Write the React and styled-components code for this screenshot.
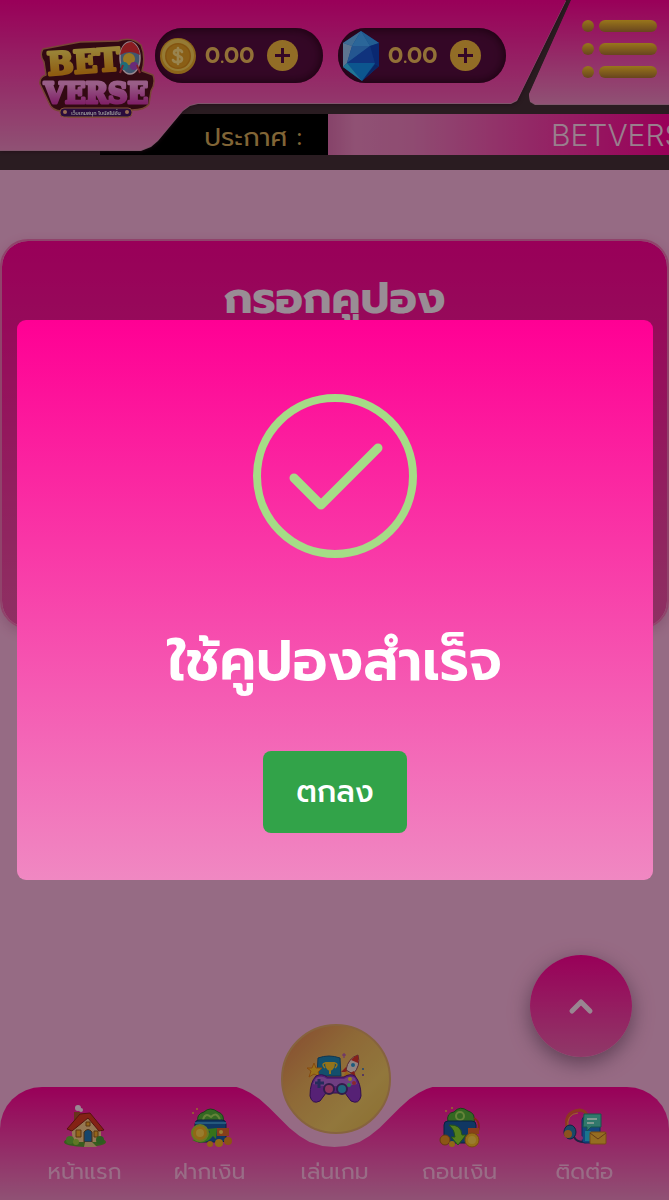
import styled, { createGlobalStyle } from "styled-components";

const GlobalStyle = createGlobalStyle`
  *, *::before, *::after {
    box-sizing: border-box;
  }
  body {
    margin: 0;
    background: #fbb2dc;
    font-family: Prompt, "Noto Sans", sans-serif;
  }
  button {
    font-family: inherit;
    border: 0;
    padding: 0;
    cursor: pointer;
  }
  svg {
    display: block;
  }
`;

const Page = styled.div`
  min-height: 100vh;
  padding-bottom: 120px;
`;

/* header */

const Header = styled.header`
  display: grid;
  grid-template-columns: 1fr 38px 103px;
  grid-template-rows: 114px 41px;
  padding-bottom: 15px;
  background: #462f37;
`;

const PanelEdge = styled.div`
  z-index: 1;
  grid-row: 1 / 3;
  grid-column: 1 / 3;
  filter: drop-shadow(0 1px 0 #d48fb2) drop-shadow(0 0 2px #3a1028);
`;

const MainPanel = styled.div`
  display: flex;
  align-items: flex-start;
  height: 150px;
  padding: 28px 0 0 38px;
  background: linear-gradient(#ff0094, #f088c2);
  clip-path: polygon(
    0 0, 100% 0, calc(100% - 46px) 94px, calc(100% - 49px) 100px, calc(100% - 55px) 103px,
    198px 103px, 190px 105px, 183px 110px, 158px 140px, 151px 146px, 141px 150px, 0 150px
  );
`;

const Logo = styled.a`
  flex: none;
  margin-top: 7px;
`;

const Wallet = styled.div`
  display: flex;
  align-items: center;
  width: 168px;
  height: 55px;
  margin-right: 15px;
  padding-left: 3px;
  border-radius: 28px;
  background: #580d40;
  box-shadow: inset 0 0 8px 2px #33051f;
`;

const WalletIcon = styled.span`
  display: flex;
  justify-content: center;
  width: 40px;
  margin-right: 7px;
`;

const Amount = styled.span`
  width: 62px;
  color: #f4bd5c;
  font-size: 22px;
  font-weight: 600;
  line-height: 30px;
`;

const PlusButton = styled.button`
  display: grid;
  place-items: center;
  width: 31px;
  height: 31px;
  border-radius: 50%;
  background: #f4b640;
`;

const MenuEdge = styled.div`
  grid-row: 1;
  grid-column: 2 / 4;
  filter: drop-shadow(0 1px 0 #d48fb2);
`;

const MenuPanel = styled.div`
  display: flex;
  justify-content: flex-end;
  height: 104px;
  padding: 20px 12px 0 0;
  background: linear-gradient(#ff0094, #f088c2);
  clip-path: polygon(43px 0, 100% 0, 100% 100%, 7px 100%, 2px 101px, 1px 94px);
`;

const MenuButton = styled.button`
  height: 58px;
  background: none;
`;

const NewsLabel = styled.div`
  grid-row: 2;
  grid-column: 1 / 4;
  width: 328px;
  padding-right: 26px;
  background: linear-gradient(to right, #462f37 100px, #000 100px);
  color: #d8a95a;
  font-size: 26px;
  font-weight: 400;
  line-height: 48px;
  text-align: right;
`;

const NewsTrack = styled.div`
  grid-row: 2;
  grid-column: 1 / 4;
  margin-left: 328px;
  padding-left: 223px;
  background: linear-gradient(to right, #e070b0, #f088c2 8%, #ee7dbd 25%, #ff0094);
  color: #ffd4ec;
  font-family: Inter, sans-serif;
  font-size: 30px;
  font-weight: 300;
  line-height: 42px;
  white-space: nowrap;
  overflow: hidden;
`;

/* coupon card */

const CouponCard = styled.section`
  height: 390px;
  margin-top: 69px;
  padding-top: 23px;
  border: 2px solid #f070b2;
  border-radius: 28px;
  background: linear-gradient(#ff0094, #ec52a4) padding-box;
  box-shadow: 0 4px 12px rgba(120, 20, 80, 0.2);
  text-align: center;
`;

const CardTitle = styled.h1`
  margin: 0;
  color: #ffecf8;
  font-size: 44px;
  font-weight: 700;
  line-height: 70px;
`;

/* floating button and bottom bar */

const TopButton = styled.button`
  position: fixed;
  right: 37px;
  bottom: 143px;
  display: grid;
  place-items: center;
  width: 102px;
  height: 102px;
  border-radius: 50%;
  background: linear-gradient(#ff0094, #f060ae);
  box-shadow: 0 6px 20px rgba(60, 30, 60, 0.5);
`;

const NOTCH = [
  [98, 0], [92, 2], [84, 6], [75, 12], [65, 21], [55, 31], [45, 41], [35, 49], [25, 55], [12, 59], [0, 60],
];
const notchLeft = NOTCH.map(([x, y]) => `calc(50% - ${x}px) ${y}px`);
const notchRight = NOTCH.slice(0, -1).reverse().map(([x, y]) => `calc(50% + ${x}px) ${y}px`);
const notchPath = ["0 0", ...notchLeft, ...notchRight, "100% 0", "100% 100%", "0 100%"].join(", ");

const BottomBar = styled.nav`
  position: fixed;
  right: 0;
  bottom: 0;
  left: 0;
`;

const BarItems = styled.div`
  display: grid;
  grid-template-columns: repeat(5, 1fr);
  height: 113px;
  padding: 0 22px;
  border-radius: 42px 42px 0 0;
  background: linear-gradient(#ff0094, #f088c2);
  clip-path: polygon(${notchPath});
`;

const BarLink = styled.a`
  display: flex;
  flex-direction: column;
  align-items: center;
  justify-content: flex-end;
  padding-bottom: 10px;
  color: #ffb6e0;
  font-size: 22px;
  font-weight: 400;
  line-height: 36px;
  text-decoration: none;
  white-space: nowrap;

  svg {
    margin-bottom: 6px;
  }
`;

const PlayBadge = styled.a`
  position: absolute;
  bottom: 66px;
  left: 50%;
  display: grid;
  place-items: center;
  width: 110px;
  height: 110px;
  margin-left: -54px;
  border: 2px solid #e0a568;
  border-radius: 50%;
  background: linear-gradient(135deg, #e07c50, #edaf5c 38%, #f3c765 70%, #e8b850);
`;

/* dialog */

const Overlay = styled.div`
  position: fixed;
  inset: 0;
  z-index: 10;
  display: flex;
  align-items: center;
  justify-content: center;
  padding: 0 16px 0 17px;
  background: rgba(0, 0, 0, 0.4);
`;

const Dialog = styled.div`
  display: flex;
  flex-direction: column;
  align-items: center;
  width: 100%;
  padding: 74px 20px 47px;
  border-radius: 9px;
  background: linear-gradient(#ff0094, #f088c2);
`;

const DialogTitle = styled.h2`
  margin: 62px 0 47px;
  color: #fff;
  font-size: 56px;
  font-weight: 600;
  line-height: 84px;
`;

const ConfirmButton = styled.button`
  width: 144px;
  height: 82px;
  border-radius: 8px;
  background: #32a349;
  color: #fff;
  font-size: 30px;
  font-weight: 500;
`;

const BetverseLogo = () => (
  <svg width="117" height="86" viewBox="0 0 117 86" role="img" aria-label="BET VERSE">
    <defs>
      <linearGradient id="gold" x1="0" y1="0" x2="0" y2="1">
        <stop offset="0.2" stopColor="#ffd95a" />
        <stop offset="0.8" stopColor="#ee9a1c" />
      </linearGradient>
      <linearGradient id="candy" x1="0" y1="0" x2="0" y2="1">
        <stop offset="0.2" stopColor="#ff9de2" />
        <stop offset="0.8" stopColor="#d63aae" />
      </linearGradient>
    </defs>
    <path
      d="M5 14 L42 7 L80 6 Q94 1 103 10 Q108 22 104 36 L115 40 Q118 48 113 56 L111 69 Q107 75 94 75 L90 82 H30 L24 76 Q14 76 11 68 L2 49 Q1 42 8 40 L6 27 Q1 20 5 14Z"
      fill="#54101f"
      stroke="#c8755a"
      strokeWidth="1.5"
      strokeLinejoin="round"
    />
    <g fontFamily="'DejaVu Serif', serif" fontWeight="700" strokeLinejoin="round">
      <text x="10" y="40" fontSize="31" fill="url(#gold)" stroke="url(#gold)" strokeWidth="3" transform="rotate(-4 10 40)">
        BET
      </text>
      <text x="6" y="68" fontSize="27" fill="url(#candy)" stroke="url(#candy)" strokeWidth="3">
        VERSE
      </text>
    </g>
    <ellipse cx="92" cy="23" rx="10" ry="16" fill="#6a8fb8" stroke="#ffe0ec" strokeWidth="1.5" />
    <path d="M82 20 Q84 7 94 7 Q101 11 102 20 Q92 14 82 20Z" fill="#e83038" />
    <circle cx="91" cy="24" r="6" fill="#ffc83c" />
    <circle cx="86" cy="31" r="4" fill="#36b5c8" />
    <circle cx="96" cy="31" r="4" fill="#b048c8" />
    <path d="M82 38 L85 30 M102 38 L99 30" stroke="#d83a4a" strokeWidth="2" />
    <rect x="22" y="73" width="72" height="9" rx="4" fill="#471567" stroke="#db8c5a" />
    <circle cx="27" cy="77" r="2" fill="#ffb58a" />
    <circle cx="89" cy="77" r="2" fill="#ffb58a" />
    <text x="58" y="80" textAnchor="middle" fontSize="5" fontWeight="500" fill="#fff" fontFamily="Prompt, sans-serif">
      เว็บเกมสนุก โบนัสไม่อั้น
    </text>
  </svg>
);

const CoinIcon = () => (
  <svg width="36" height="36" viewBox="0 0 36 36">
    <circle cx="18" cy="18" r="18" fill="#eaa92c" />
    <circle cx="18" cy="17" r="16" fill="#f8cc58" />
    <circle cx="18" cy="18" r="13" fill="#dc8d1c" />
    <circle cx="18" cy="18" r="11.5" fill="#e79f26" />
    <path d="M22 14 C21 11 14 11 14 15 C14 18 22 17 22 21 C22 25 14 25 13 22 M18 10 V26" fill="none" stroke="#ffdc84" strokeWidth="2.6" strokeLinecap="round" />
  </svg>
);

const GemIcon = () => (
  <svg width="40" height="52" viewBox="0 0 40 52">
    <path d="M20 1 L38 13 V36 L21 51 L2 37 V13Z" fill="#1668d8" />
    <path d="M20 1 L2 13 L11 16Z" fill="#69b4f5" />
    <path d="M20 1 L38 13 L29 16Z" fill="#3a9cf4" />
    <path d="M20 1 L11 16 H29Z" fill="#49abff" />
    <path d="M2 13 L11 16 L6 33 L2 37Z" fill="#9cc4f0" />
    <path d="M11 16 H29 L6 33Z" fill="#3c8ff0" />
    <path d="M29 16 L34 34 L6 33Z" fill="#1c56d0" />
    <path d="M29 16 L38 13 V36 L34 34Z" fill="#1144bd" />
    <path d="M6 33 H34 L21 51Z" fill="#1590ee" />
    <path d="M2 37 L6 33 L21 51Z" fill="#37c3f8" />
    <path d="M38 36 L34 34 L21 51Z" fill="#0e3fa8" />
  </svg>
);

const PlusIcon = () => (
  <svg width="17" height="17" viewBox="0 0 17 17">
    <path d="M8.5 1 V16 M1 8.5 H16" stroke="#580d40" strokeWidth="3" />
  </svg>
);

const MenuIcon = () => (
  <svg width="75" height="58" viewBox="0 0 75 58">
    <defs>
      <linearGradient id="bar" x1="0" y1="0" x2="0" y2="1">
        <stop offset="0" stopColor="#ffc52e" />
        <stop offset="1" stopColor="#ae7233" />
      </linearGradient>
    </defs>
    {[0, 23, 46].map((y) => (
      <g key={y} fill="url(#bar)">
        <circle cx="6" cy={y + 6} r="6" />
        <rect x="17" y={y} width="58" height="12" rx="6" />
      </g>
    ))}
  </svg>
);

const HouseIcon = () => (
  <svg width="44" height="44" viewBox="0 0 44 44">
    <ellipse cx="22" cy="38" rx="21" ry="5" fill="#5f9a32" />
    <path d="M11 8 H17 V20 H11Z" fill="#b0552e" />
    <circle cx="15" cy="4" r="3" fill="#ffe4f4" />
    <circle cx="18" cy="6" r="2" fill="#ffe4f4" />
    <path d="M8 21 L24 11 L38 23 V38 H10Z" fill="#f8c98a" />
    <path d="M4 25 L17 10 L27 9 L41 26 L36 27 L25 14 L9 27Z" fill="#dc3a24" stroke="#8e2018" />
    <path d="M21 38 V28 Q25 23 29 28 V38Z" fill="#2374b4" stroke="#7c4a20" />
    <path d="M13 26 H18 V33 H13Z M31 27 H35 V33 H31Z M23 18 H27 V22 H23Z" fill="#f6a82c" stroke="#98581e" />
    <circle cx="7" cy="36" r="4" fill="#6eb53c" />
    <circle cx="13" cy="38" r="3" fill="#a0c83c" />
    <circle cx="37" cy="36" r="4" fill="#4c9a38" />
    <path d="M22 38 H29 L34 43 H21Z" fill="#e8c088" />
  </svg>
);

const DepositIcon = () => (
  <svg width="44" height="44" viewBox="0 0 44 44">
    <path d="M10 18 Q8 10 16 8 Q22 2 30 8 Q37 10 35 19Z" fill="#58ae3a" stroke="#287028" />
    <path d="M15 16 Q17 8 23 13 Q29 7 32 16" fill="none" stroke="#a8dc60" strokeWidth="2" />
    <rect x="7" y="16" width="31" height="22" rx="4" fill="#1c5da6" stroke="#153868" />
    <path d="M7 19 H38" stroke="#3e94d0" strokeWidth="2" />
    <path d="M29 24 H41 V32 H29Z" fill="#e06a2c" />
    <circle cx="33" cy="28" r="2" fill="#ffd254" />
    <path d="M4 36 Q16 43 25 32 L28 35 L29 24 L19 25 L22 28 Q15 35 4 36Z" fill="#5bc02c" />
    <circle cx="12" cy="29" r="8" fill="#f2ae24" stroke="#b0c83a" strokeWidth="2" />
    <circle cx="12" cy="29" r="4" fill="#ffcf4c" />
    <circle cx="22" cy="40" r="3" fill="#f4a024" />
    <circle cx="31" cy="39" r="4" fill="#f4b024" />
    <circle cx="40" cy="37" r="4" fill="#e88a24" />
    <circle cx="5" cy="9" r="1" fill="#ffb050" />
    <circle cx="9" cy="5" r="1" fill="#ffb050" />
  </svg>
);

const WithdrawIcon = () => (
  <svg width="44" height="44" viewBox="0 0 44 44">
    <path d="M10 18 Q8 9 16 8 Q22 1 30 7 Q38 9 36 19Z" fill="#58ae3a" stroke="#287028" />
    <circle cx="22" cy="12" r="4" fill="none" stroke="#a8dc60" strokeWidth="2" />
    <rect x="6" y="17" width="32" height="22" rx="4" fill="#1c5da6" stroke="#153868" />
    <path d="M36 14 Q43 18 40 27" fill="none" stroke="#e23c26" strokeWidth="2" />
    <path d="M30 24 H41 V30 H30Z" fill="#e8692c" />
    <path d="M11 21 Q23 20 24 31 H28 L20 41 L13 33 H17 Q17 26 11 21Z" fill="#8ad430" stroke="#398828" />
    <circle cx="7" cy="36" r="5" fill="#e89024" stroke="#ae601e" />
    <circle cx="14" cy="40" r="3" fill="#f2ae24" />
    <circle cx="34" cy="36" r="7" fill="#f8b828" stroke="#c8781e" />
    <circle cx="34" cy="36" r="4" fill="#ffcf4c" />
    <circle cx="8" cy="7" r="1" fill="#ffb050" />
    <circle cx="14" cy="4" r="1" fill="#ffb050" />
  </svg>
);

const ContactIcon = () => (
  <svg width="44" height="44" viewBox="0 0 44 44">
    <path d="M5 27 Q-1 8 17 6 Q24 7 24 13" fill="none" stroke="#ed5a38" strokeWidth="3" />
    <path d="M5 24 Q3 10 15 9" fill="none" stroke="#ffae3c" strokeWidth="1" />
    <ellipse cx="7" cy="28" rx="6" ry="7" fill="#2a7aae" stroke="#173b70" />
    <circle cx="5" cy="30" r="4" fill="#e88a34" />
    <path d="M11 33 Q14 39 24 38" fill="none" stroke="#343a70" strokeWidth="2" />
    <rect x="19" y="13" width="18" height="26" rx="3" fill="#2277d4" stroke="#174a98" />
    <path d="M21 10 H38 V23 H28 L24 27 V23 H20Z" fill="#52c8b4" stroke="#26907c" />
    <path d="M24 15 H34 M24 19 H31" stroke="#d5fff0" strokeWidth="2" />
    <path d="M22 27 H28 V37 H22Z" fill="#2bc3ee" />
    <rect x="27" y="28" width="16" height="12" rx="1" fill="#f8b638" stroke="#cc7c22" />
    <path d="M27 29 L35 35 L43 29" fill="none" stroke="#a8622a" />
    <circle cx="18" cy="34" r="2" fill="#d84cb8" />
  </svg>
);

const GamepadIcon = () => (
  <svg width="58" height="52" viewBox="0 0 58 52">
    <path d="M11 5 Q22 1 33 5 L34 23 H10Z" fill="#2184b4" stroke="#1a5a88" />
    <path d="M18 9 H28 Q28 17 23 18 Q18 17 18 9Z M22 17 H24 V21 H22Z" fill="#f5c02c" />
    <path d="M18 10 Q14 11 18 15 M28 10 Q32 11 28 15" fill="none" stroke="#f5c02c" strokeWidth="1.5" />
    <path d="M7 10 L9 15 L15 15 L11 19 L13 24 L7 21 L2 24 L4 18 L0 15 L5 15Z" fill="#ffbc28" stroke="#e07c1c" />
    <path d="M51 2 Q41 5 39 17 L46 21 Q54 13 51 2Z" fill="#f4dcd8" stroke="#93455a" />
    <path d="M51 2 Q47 3 44 7 L51 10 Q52 6 51 2Z" fill="#e0382c" />
    <path d="M39 14 L34 19 L40 19Z M47 18 L49 24 L43 20Z" fill="#d83230" />
    <circle cx="46" cy="12" r="2" fill="#3098d0" />
    <path d="M39 18 L35 26 L44 22Z" fill="#ffa62c" />
    <path d="M9 23 Q15 20 20 24 H37 Q43 20 48 23 Q54 30 54 43 Q52 52 44 48 L38 40 H19 L13 48 Q5 52 3 43 Q3 29 9 23Z" fill="#8f38c4" stroke="#511882" />
    <path d="M9 25 Q15 22 20 26 H37 Q43 22 48 25 L50 31 Q40 34 29 33 Q16 34 6 31Z" fill="#b968d8" />
    <path d="M8 30 H17 M12 26 V35" stroke="#3e4a98" strokeWidth="3" />
    <circle cx="22" cy="36" r="5" fill="#e5569c" stroke="#54307c" strokeWidth="2" />
    <circle cx="35" cy="36" r="5" fill="#38a8d0" stroke="#54307c" strokeWidth="2" />
    <circle cx="43" cy="26" r="2" fill="#f8d23c" />
    <circle cx="47" cy="30" r="2" fill="#e8424c" />
    <circle cx="42" cy="32" r="2" fill="#48d888" />
    <path d="M37 0 V5 M35 2 H39" stroke="#b048c0" />
    <circle cx="56" cy="16" r="1" fill="#3072c0" />
    <circle cx="56" cy="22" r="1" fill="#7040b0" />
  </svg>
);

const wallets = [
  { name: "coin", icon: <CoinIcon />, amount: "0.00" },
  { name: "gem", icon: <GemIcon />, amount: "0.00" },
];

const links = [
  { label: "หน้าแรก", icon: <HouseIcon /> },
  { label: "ฝากเงิน", icon: <DepositIcon /> },
  { label: "เล่นเกม", icon: null },
  { label: "ถอนเงิน", icon: <WithdrawIcon /> },
  { label: "ติดต่อ", icon: <ContactIcon /> },
];

const App = () => {
  return (
    <>
      <GlobalStyle />
      <Page>
        <Header>
          <PanelEdge>
            <MainPanel>
              <Logo href="#">
                <BetverseLogo />
              </Logo>
              {wallets.map((wallet) => (
                <Wallet key={wallet.name}>
                  <WalletIcon>{wallet.icon}</WalletIcon>
                  <Amount>{wallet.amount}</Amount>
                  <PlusButton aria-label={`Add ${wallet.name}`}>
                    <PlusIcon />
                  </PlusButton>
                </Wallet>
              ))}
            </MainPanel>
          </PanelEdge>
          <MenuEdge>
            <MenuPanel>
              <MenuButton aria-label="Menu">
                <MenuIcon />
              </MenuButton>
            </MenuPanel>
          </MenuEdge>
          <NewsLabel>ประกาศ :</NewsLabel>
          <NewsTrack>BETVERSE</NewsTrack>
        </Header>
        <CouponCard>
          <CardTitle>กรอกคูปอง</CardTitle>
        </CouponCard>
      </Page>
      <TopButton aria-label="Back to top">
        <svg width="26" height="18" viewBox="0 0 26 18">
          <path d="M4 14 L13 5 L22 14" fill="none" stroke="#ffe0f2" strokeWidth="5" strokeLinecap="round" strokeLinejoin="round" />
        </svg>
      </TopButton>
      <BottomBar>
        <BarItems>
          {links.map((link) => (
            <BarLink key={link.label} href="#">
              {link.icon}
              {link.label}
            </BarLink>
          ))}
        </BarItems>
        <PlayBadge href="#" aria-label="เล่นเกม">
          <GamepadIcon />
        </PlayBadge>
      </BottomBar>
      <Overlay>
        <Dialog role="dialog" aria-modal="true" aria-labelledby="dialog-title">
          <svg width="164" height="164" viewBox="0 0 164 164">
            <circle cx="82" cy="82" r="78" fill="none" stroke="#a5dc86" strokeWidth="8" />
            <path d="M41 84 L68 111 L125 54" fill="none" stroke="#a5dc86" strokeWidth="9" strokeLinecap="round" strokeLinejoin="round" />
          </svg>
          <DialogTitle id="dialog-title">ใช้คูปองสำเร็จ</DialogTitle>
          <ConfirmButton>ตกลง</ConfirmButton>
        </Dialog>
      </Overlay>
    </>
  );
};

export default App;
